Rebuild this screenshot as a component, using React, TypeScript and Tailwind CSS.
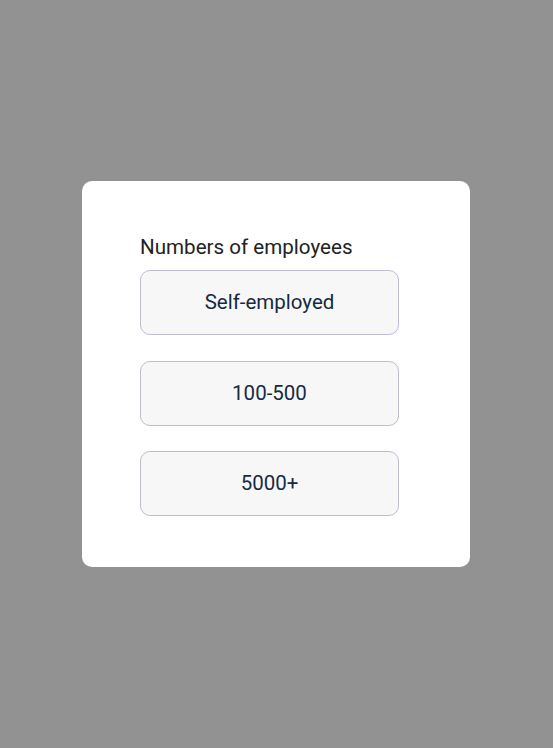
import React from "react";

const options = ["Self-employed", "100-500", "5000+"];

export default function App() {
  return (
    <div
      className="flex h-[748px] w-full items-center justify-center bg-[#929292]"
      style={{ fontFamily: "Roboto, 'Noto Sans', sans-serif" }}
    >
      <div className="mr-px flex h-[386px] w-[388px] flex-col rounded-[10px] bg-white pl-[58px] pt-[54px]">
        <h2 className="text-[20.6px] leading-[24px] text-[#222222]">Numbers of employees</h2>
        <div className="mt-[11px] flex flex-col gap-[25.5px]">
          {options.map((o) => (
            <button
              key={o}
              className="flex h-[65px] w-[259px] items-center justify-center rounded-[10px] border-[1.5px] border-[#bcbdcf] bg-[#f7f7f7] text-[20.5px] text-[#182a42]"
            >
              {o}
            </button>
          ))}
        </div>
      </div>
    </div>
  );
}
